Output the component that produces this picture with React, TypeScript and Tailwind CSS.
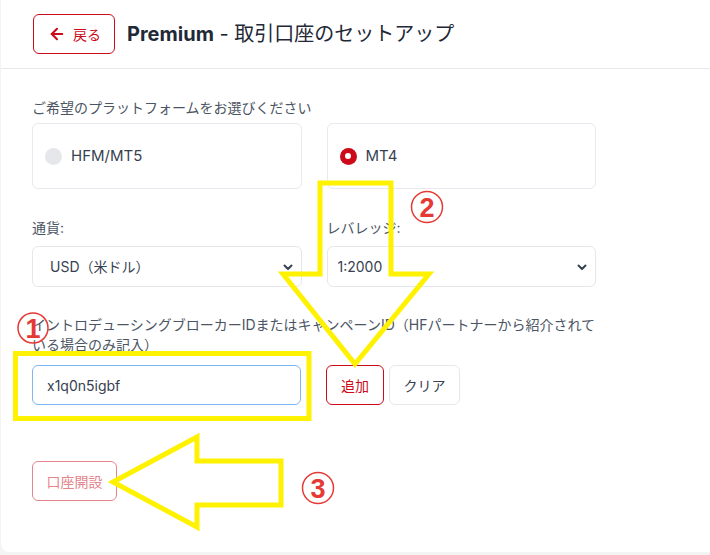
import React, { useState } from "react";
import { ArrowLeft } from "lucide-react";

const font = "font-['Inter','Noto_Sans_CJK_JP',sans-serif]";

const Chevron = () => (
  <svg
    width="12"
    height="12"
    viewBox="0 0 24 24"
    fill="none"
    stroke="#374151"
    strokeWidth="4"
    strokeLinecap="round"
    strokeLinejoin="round"
    className="pointer-events-none absolute right-[8px] top-1/2 -translate-y-1/2"
  >
    <path d="M5 9l7 7 7-7" />
  </svg>
);

const PlatformCard = ({
  label,
  selected,
  onClick,
}: {
  label: string;
  selected: boolean;
  onClick: () => void;
}) => (
  <button
    type="button"
    onClick={onClick}
    className="flex h-[66px] items-center gap-[9px] rounded-md border border-[#e8e8ee] bg-white pl-[12px] text-left"
  >
    {selected ? (
      <span className="flex h-[17px] w-[17px] items-center justify-center rounded-full bg-[#cc0a1a]">
        <span className="h-[6px] w-[6px] rounded-full bg-white" />
      </span>
    ) : (
      <span className="h-[17px] w-[17px] rounded-full bg-[#e5e7eb]" />
    )}
    <span className="text-[15px] text-[#374151]">{label}</span>
  </button>
);

// yellow arrows and circled numbers drawn over the page
const Annotations = () => (
  <svg
    className="pointer-events-none absolute left-0 top-0"
    width="710"
    height="555"
    viewBox="0 0 710 555"
  >
    <g fill="none" stroke="#fff200" strokeWidth="5" strokeLinejoin="miter">
      <rect x="15.5" y="353.5" width="293.5" height="65" />
      <polygon points="320,183 391,183 391,274 429,274 355,364 283,274 320,274" />
      <polygon points="113,482 197,437 197,461 281,461 281,505 197,505 197,527" />
    </g>
    <g fill="none" stroke="#e53935" strokeWidth="1.5">
      <circle cx="33" cy="328" r="15" />
      <circle cx="427" cy="207" r="15.5" />
      <circle cx="318" cy="488" r="15.5" />
    </g>
    <g
      fill="#e53935"
      fontFamily="'Liberation Sans', sans-serif"
      fontWeight="700"
      fontSize="27"
      textAnchor="middle"
    >
      <text x="33" y="337.5">1</text>
      <text x="427" y="216.5">2</text>
      <text x="318" y="497.5">3</text>
    </g>
  </svg>
);

export default function App() {
  const [platform, setPlatform] = useState("MT4");
  const [code, setCode] = useState("x1q0n5igbf");

  return (
    <div className={`relative h-[555px] w-[710px] overflow-hidden bg-[#f4f4f5] pb-[3px] pl-[1px] ${font}`}>
      <div className="h-full rounded-bl-lg bg-white">
        {/* header */}
        <div className="flex items-center gap-[12px] border-b border-[#e8e8ec] pb-[14px] pl-[32px] pt-[14px]">
          <button
            type="button"
            onClick={() => window.history.back()}
            className="flex h-[40px] w-[82px] items-center gap-[7px] rounded-md border border-[#cc0a1a] pl-[14px] text-[14px] text-[#cc0a1a]"
          >
            <ArrowLeft size={18} strokeWidth={2.75} />
            戻る
          </button>
          <h1 className="text-[20px] text-[#1f2937]">
            <span className="font-bold">Premium</span> - 取引口座のセットアップ
          </h1>
        </div>

        {/* form */}
        <div className="w-[595px] pl-[31px] pt-[29px]">
          <p className="mb-[5px] text-[14px] leading-[20px] text-[#4b5563]">
            ご希望のプラットフォームをお選びください
          </p>
          <div className="grid grid-cols-2 gap-[25px]">
            <PlatformCard
              label="HFM/MT5"
              selected={platform === "HFM/MT5"}
              onClick={() => setPlatform("HFM/MT5")}
            />
            <PlatformCard
              label="MT4"
              selected={platform === "MT4"}
              onClick={() => setPlatform("MT4")}
            />
          </div>

          <div className="mt-[29px] grid grid-cols-2 gap-[25px]">
            <div>
              <label className="mb-[8px] block text-[14px] leading-[20px] text-[#4b5563]">
                通貨:
              </label>
              <div className="relative">
                <select className="h-[41px] w-full appearance-none rounded-md border border-[#e5e7eb] bg-white pl-[17px] text-[14px] text-[#374151] outline-none">
                  <option>USD（米ドル）</option>
                  <option>EUR（ユーロ）</option>
                  <option>JPY（日本円）</option>
                </select>
                <Chevron />
              </div>
            </div>
            <div>
              <label className="mb-[8px] block text-[14px] leading-[20px] text-[#4b5563]">
                レバレッジ:
              </label>
              <div className="relative">
                <select className="h-[41px] w-full appearance-none rounded-md border border-[#e5e7eb] bg-white pl-[10px] text-[14px] text-[#374151] outline-none">
                  <option>1:2000</option>
                  <option>1:1000</option>
                  <option>1:500</option>
                </select>
                <Chevron />
              </div>
            </div>
          </div>

          <p className="mt-[28px] mb-[10px] text-[14px] leading-[20px] text-[#4b5563]">
            イントロデューシングブローカーIDまたはキャンペーンID（HFパートナーから紹介されている場合のみ記入）
          </p>
          <div className="flex items-center">
            <input
              value={code}
              onChange={(e) => setCode(e.target.value)}
              className="h-[40px] w-[269px] rounded-md border border-[#7cb6f5] px-[14px] text-[14px] text-[#374151] outline-none"
            />
            <button
              type="button"
              className="ml-[25px] h-[40px] w-[58px] rounded-md border border-[#cc0a1a] text-[14px] text-[#cc0a1a]"
            >
              追加
            </button>
            <button
              type="button"
              onClick={() => setCode("")}
              className="ml-[5px] h-[40px] w-[71px] rounded-md border border-[#e5e7eb] text-[14px] text-[#374151]"
            >
              クリア
            </button>
          </div>

          <button
            type="button"
            disabled
            className="mt-[56px] h-[40px] w-[85px] rounded-md border border-[#e4858c] text-[14px] text-[#e4858c]"
          >
            口座開設
          </button>
        </div>
      </div>
      <Annotations />
    </div>
  );
}
